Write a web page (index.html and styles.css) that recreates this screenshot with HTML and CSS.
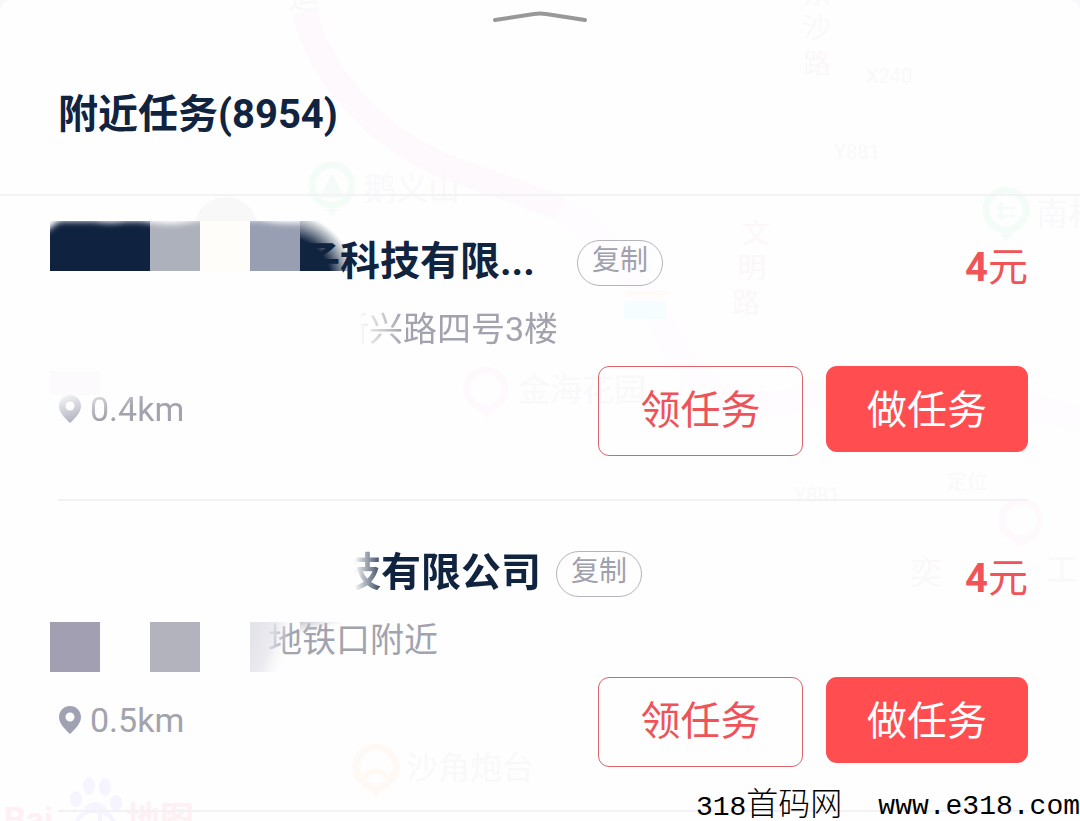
FILE: index.html
```html
<!DOCTYPE html>
<html lang="zh-CN">
<head>
<meta charset="utf-8">
<meta name="viewport" content="width=device-width, initial-scale=1">
<title>附近任务</title>
<link rel="stylesheet" href="styles.css">
</head>
<body>
<main class="sheet">
  <svg class="map" viewBox="0 0 1080 821" preserveAspectRatio="xMinYMin slice" aria-hidden="true">
    <path d="M304 12C320 70 370 140 460 172S540 200 560 208" fill="none" stroke="#fdf9fd" stroke-width="25"/>
    <path d="M560 208Q620 240 668 335T810 395 1080 420" fill="none" stroke="#fefcfe" stroke-width="25"/>
    <circle cx="226" cy="229" r="32" fill="#f8f8f9"/>
    <g fill="none" stroke="#f4fcf7" stroke-width="7">
      <circle cx="332" cy="185" r="20"/>
      <circle cx="1006" cy="210" r="20"/>
    </g>
    <path d="M319 198l13-25 13 25z" fill="#f5fbf8"/>
    <path d="M325 209l7 7 7-7zM999 234l7 7 7-7z" fill="#f7fafc"/>
    <path d="M997 208h18m-18 8h18m-14-14v18" stroke="#f4fcf7" stroke-width="3"/>
    <g fill="none" stroke="#fdf9fd" stroke-width="7">
      <circle cx="486" cy="389" r="19"/>
      <circle cx="1021" cy="520" r="19"/>
    </g>
    <path d="M479 411l7 7 7-7zM1014 542l7 7 7-7z" fill="#fdf9fd"/>
    <circle cx="376" cy="767" r="20" fill="none" stroke="#fff9f5" stroke-width="7"/>
    <path d="M366 786l10 12 10-12z" fill="#fff8f5"/>
    <path d="M364 778q12-14 24 0" fill="none" stroke="#fff8f3" stroke-width="5"/>
    <path d="M625 293h42" stroke="#fffaf5" stroke-width="4"/>
    <rect x="624" y="301" width="42" height="18" fill="#f5fdfe"/>
    <g class="map-text">
      <text x="364" y="200">鹅义山</text>
      <text x="1036" y="225">南村</text>
      <text x="518" y="401">金海花园</text>
      <text x="406" y="779">沙角炮台</text>
      <text x="910" y="584">奕</text>
      <text x="1046" y="581">工业</text>
      <text x="288" y="8">运</text>
    </g>
    <g class="map-text map-text--road">
      <text x="803" y="4">东</text>
      <text x="803" y="38">沙</text>
      <text x="803" y="74">路</text>
      <text x="742" y="243">文</text>
      <text x="738" y="278">明</text>
      <text x="732" y="313">路</text>
    </g>
    <g class="map-text map-text--small">
      <text x="866" y="83">X240</text>
      <text x="834" y="159">Y881</text>
      <text x="794" y="502">Y881</text>
      <text x="947" y="489">定位</text>
    </g>
    <g fill="#f6f4ff">
      <ellipse cx="89" cy="786" rx="6" ry="9"/>
      <ellipse cx="105" cy="787" rx="6" ry="9"/>
      <ellipse cx="76" cy="799" rx="6" ry="8"/>
      <ellipse cx="116" cy="803" rx="6" ry="8"/>
      <path d="M84 808q11-12 23 0l-3 4q-9-6-17 0z"/>
    </g>
    <path d="M77 821q5-10 18-10t19 10m-14-9v9" fill="none" stroke="#f6f4ff" stroke-width="4"/>
    <g class="map-brand">
      <text x="4" y="831">Bai</text>
      <text x="126" y="831">地图</text>
    </g>
  </svg>

  <header class="header">
    <button class="handle" type="button" aria-label="收起">
      <svg width="94" height="14" viewBox="0 0 94 14" aria-hidden="true"><path d="M2 12L41 6q6-1 12 0L92 12" fill="none" stroke="#989898" stroke-width="4" stroke-linecap="round"/></svg>
    </button>
    <h1 class="title">附近任务(8954)</h1>
  </header>

  <ul class="tasks">
    <li class="task">
      <div class="task-head">
        <h2 class="name name--clipped">子科技有限...</h2>
        <button class="copy" type="button">复制</button>
        <p class="price"><b>4</b>元</p>
      </div>
      <p class="address address--first">新兴路四号3楼</p>
      <div class="task-foot">
        <p class="distance distance--faded">
          <svg class="pin" width="24" height="30" viewBox="0 0 24 30" aria-hidden="true"><path fill="#a0a2b3" fill-rule="evenodd" d="M12 1C6 1 1 5.800 1 12c0 6 5 11.500 11 17 6-5.500 11-11 11-17C23 5.800 18 1 12 1zm0 6.500a4.500 4.500 0 1 1 0 9 4.500 4.500 0 0 1 0-9z"/></svg>
          0.4km
        </p>
        <button class="btn btn--outline" type="button">领任务</button>
        <button class="btn btn--fill" type="button">做任务</button>
      </div>
      <svg class="mosaic mosaic--name" width="300" height="66" viewBox="0 0 300 66" aria-hidden="true">
        <defs>
          <radialGradient id="edge" gradientUnits="userSpaceOnUse" cx="236" cy="62" r="70">
            <stop offset="0.650" stop-color="#10233f"/>
            <stop offset="1" stop-color="#10233f" stop-opacity="0"/>
          </radialGradient>
          <filter id="soft" x="-20%" y="-200%" width="140%" height="500%">
            <feGaussianBlur stdDeviation="3"/>
          </filter>
          <clipPath id="strip"><rect width="250" height="50"/></clipPath>
        </defs>
        <rect x="240" y="50" width="51" height="16" fill="#fefefe"/>
        <rect width="100" height="50" fill="#0f2240"/>
        <rect x="100" width="50" height="50" fill="#adb1bc"/>
        <rect x="150" width="50" height="50" fill="#fffdf9"/>
        <rect x="200" width="50" height="50" fill="#989fb3"/>
        <rect x="250" width="50" height="50" fill="url(#edge)"/>
        <g clip-path="url(#strip)">
          <path d="M-10-10H260V2q-30 2-50-3h-60q-20 4-30 4T90 0H75q-15 3-30 0H12Q4 2 0 8l-10 4z" fill="#fff" filter="url(#soft)"/>
        </g>
      </svg>
      <svg class="mosaic mosaic--distance" width="50" height="24" viewBox="0 0 50 24" aria-hidden="true"><rect width="50" height="24" fill="#fdfafd"/></svg>
    </li>
    <li class="task">
      <div class="task-head">
        <h2 class="name name--faded">技有限公司</h2>
        <button class="copy" type="button">复制</button>
        <p class="price"><b>4</b>元</p>
      </div>
      <p class="address address--second">地铁口附近</p>
      <div class="task-foot">
        <p class="distance">
          <svg class="pin" width="24" height="30" viewBox="0 0 24 30" aria-hidden="true"><path fill="#a0a2b3" fill-rule="evenodd" d="M12 1C6 1 1 5.800 1 12c0 6 5 11.500 11 17 6-5.500 11-11 11-17C23 5.800 18 1 12 1zm0 6.500a4.500 4.500 0 1 1 0 9 4.500 4.500 0 0 1 0-9z"/></svg>
          0.5km
        </p>
        <button class="btn btn--outline" type="button">领任务</button>
        <button class="btn btn--fill" type="button">做任务</button>
      </div>
      <svg class="mosaic mosaic--address" width="300" height="50" viewBox="0 0 300 50" aria-hidden="true">
        <defs>
          <linearGradient id="mist" gradientUnits="userSpaceOnUse" x1="200" y1="20" x2="236" y2="32">
            <stop offset="0" stop-color="#e3e3ea"/>
            <stop offset="0.500" stop-color="#e6e6ec" stop-opacity="0.800"/>
            <stop offset="1" stop-color="#f2f2f6" stop-opacity="0"/>
          </linearGradient>
          <linearGradient id="haze" x1="0" y1="0" x2="1" y2="1">
            <stop offset="0" stop-color="#b9bac6" stop-opacity="0.800"/>
            <stop offset="0.500" stop-color="#d5d6de" stop-opacity="0"/>
          </linearGradient>
        </defs>
        <rect width="50" height="50" fill="#a29fb3"/>
        <rect x="100" width="50" height="50" fill="#b2b3bd"/>
        <rect x="200" width="50" height="50" fill="url(#mist)"/>
        <rect x="250" width="50" height="14" fill="url(#haze)"/>
      </svg>
    </li>
  </ul>

  <p class="site"><span>318<span class="site-name">首码网</span></span><span>www.e318.com</span></p>
</main>
</body>
</html>
```

FILE: styles.css
```css
* {
  box-sizing: border-box;
}

body {
  margin: 0;
  background: #f8f7fa;
  color: #10233f;
  font-family: Roboto, "Noto Sans CJK SC", sans-serif;
}

h1, h2, p, ul {
  margin: 0;
  padding: 0;
}

button {
  padding: 0;
  border: 0;
  background: none;
  font-family: inherit;
  cursor: pointer;
}

.sheet {
  position: relative;
  z-index: 0;
  min-height: 100vh;
  overflow: hidden;
  border-radius: 12px 12px 0 0;
  background: #fefefe;
}

/* Faded map under the sheet */
.map {
  position: absolute;
  inset: 0;
  z-index: -1;
  width: 100%;
  height: 100%;
}

.map-text {
  fill: #faf8fb;
  font-size: 32px;
}

.map-text--road {
  fill: #fcf7fa;
  font-size: 28px;
}

.map-text--small {
  font-size: 20px;
}

.map-brand {
  fill: #fff0f4;
  font-size: 34px;
  font-weight: 700;
}

.header {
  display: flex;
  flex-direction: column;
  align-items: flex-start;
  height: 196px;
  padding: 8px 58px 0;
  border-bottom: 2px solid #f3f2f4;
}

.handle {
  display: flex;
  align-self: center;
}

.title {
  margin-top: 63px;
  font-size: 40px;
  line-height: 60px;
}

.tasks {
  list-style: none;
  padding: 0 52px 0 58px;
}

.task {
  position: relative;
  padding: 44px 0 43px;
  border-bottom: 2px solid #f3f1f3;
}

.task + .task {
  padding-top: 50px;
}

.task-head {
  display: flex;
  align-items: flex-start;
}

.name {
  margin-right: 15px;
  font-size: 40px;
  line-height: 44px;
  white-space: nowrap;
}

.name--clipped {
  min-width: 504px;
  padding-left: 242px;
}

.name--faded {
  padding-left: 283px;
  mask-image: linear-gradient(to right, transparent 296px, #000 328px);
}

.copy {
  height: 46px;
  padding: 0 14px 4px;
  border: 1px solid #b3b4be;
  border-radius: 24px;
  color: #a0a1ae;
  font-size: 28px;
  line-height: 40px;
}

.price {
  margin-left: auto;
  padding-top: 6px;
  color: #f05358;
  font-size: 40px;
  line-height: 44px;
}

.address {
  margin-top: 14px;
  color: #a2a3ae;
  font-size: 34px;
  line-height: 50px;
}

.address--first {
  padding-left: 277px;
  mask-image: linear-gradient(to right, transparent 300px, #000 344px);
}

.address--second {
  padding-left: 210px;
}

.task-foot {
  display: flex;
  align-items: flex-start;
  margin-top: 12px;
}

.distance {
  display: flex;
  align-items: center;
  gap: 8px;
  height: 86px;
  margin-right: auto;
  color: #a2a3ae;
  font-size: 34px;
}

.distance--faded {
  mask-image: linear-gradient(160deg, transparent 26px, #000 64px);
}

.btn {
  border-radius: 11px;
  font-size: 40px;
}

.btn--outline {
  width: 205px;
  height: 90px;
  margin-right: 23px;
  padding-bottom: 8px;
  border: 1px solid #d9656a;
  color: #ee5359;
}

.btn--fill {
  width: 202px;
  height: 86px;
  padding-bottom: 4px;
  background: #ff4d50;
  color: #fff;
}

/* Blocks that hide the private part of a task */
.mosaic {
  position: absolute;
  left: -8px;
}

.mosaic--name {
  top: 25px;
}

.mosaic--distance {
  top: 175px;
  z-index: -1;
}

.mosaic--address {
  top: 121px;
}

.site {
  position: absolute;
  right: 0;
  bottom: -9px;
  display: flex;
  gap: 36px;
  color: #000;
  font-family: "Liberation Mono", "Noto Sans CJK SC", monospace;
  font-size: 28px;
  line-height: 44px;
  white-space: nowrap;
}

.site-name {
  font-size: 32px;
  font-weight: 300;
}
```
